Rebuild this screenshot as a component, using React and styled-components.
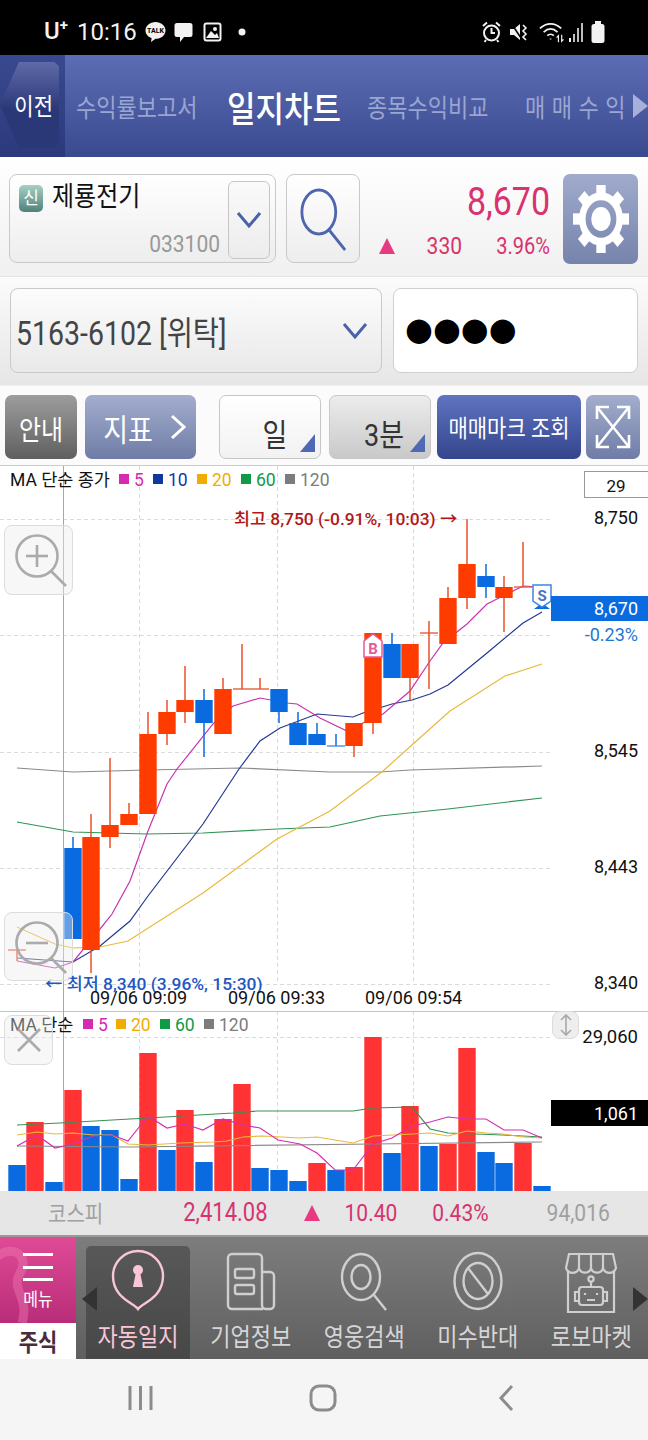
import React from "react";
import styled, { createGlobalStyle, css } from "styled-components";

const FONT = `Roboto, "Noto Sans CJK KR", sans-serif`;
const PINK = "#d8326f";

const GlobalStyle = createGlobalStyle`
  html, body {
    margin: 0;
    padding: 0;
    background: #fff;
    font-family: ${FONT};
  }
  * { box-sizing: border-box; }
`;

// the app's own text is drawn a bit stretched on this phone
const tall = css`
  display: inline-block;
  transform: scaleY(1.15);
`;

const Page = styled.div`
  width: 648px;
  height: 1440px;
  overflow: hidden;
  display: flex;
  flex-direction: column;
`;

/* status bar */
const StatusBar = styled.div`
  height: 55px;
  background: #000;
  color: #f2f2f2;
  display: flex;
  align-items: center;
  padding: 9px 43px 0 44px;
`;
const Carrier = styled.span`
  font-size: 24px;
  font-weight: 500;
  width: 33px;
  position: relative;
  top: -1px;
  sup { font-size: 15px; line-height: 0; font-weight: 700; }
`;
const Clock = styled.span`
  font-size: 24px;
  margin-right: 8px;
`;
const StatusIcons = styled.div`
  display: flex;
  align-items: center;
  gap: ${(p) => p.$gap || 6}px;
  margin-left: ${(p) => (p.$right ? "auto" : 0)};
`;
const StatusGlyph = styled.svg`
  margin-left: ${(p) => p.$ml || 0}px;
`;

/* header */
const Header = styled.div`
  height: 102px;
  display: flex;
  align-items: center;
  background: linear-gradient(#5c6db5, #3a4a8f);
`;
const BackArea = styled.div`
  width: 65px;
  height: 100%;
  background: linear-gradient(#39498f, #2c3a7c);
  display: flex;
  align-items: center;
`;
const BackButton = styled.div`
  width: 59px;
  height: 86px;
  margin-top: -2px;
  background: linear-gradient(#5f6aa8, #2b3878 55%);
  clip-path: polygon(0 50%, 32% 0, 92% 0, 100% 5%, 100% 95%, 92% 100%, 32% 100%);
  color: #fff;
  font-size: 21px;
  display: flex;
  align-items: center;
  justify-content: flex-end;
  padding-right: 6px;
  span { ${tall} }
`;
const Tabs = styled.div`
  flex: 1;
  display: flex;
  align-items: center;
  padding-left: 11px;
  white-space: nowrap;
`;
const Tab = styled.span`
  ${tall}
  width: ${(p) => p.$w}px;
  font-size: ${(p) => (p.$active ? 31 : 22)}px;
  font-weight: ${(p) => (p.$active ? 500 : 400)};
  color: ${(p) => (p.$active ? "#fff" : "#9aa5d2")};
  letter-spacing: ${(p) => p.$ls || 0}px;
`;
const TabArrow = styled.span`
  width: 0;
  height: 0;
  margin-left: -7px;
  border-left: 15px solid #a7b0d8;
  border-top: 12px solid transparent;
  border-bottom: 12px solid transparent;
`;

/* stock row */
const StockRow = styled.div`
  height: 120px;
  display: flex;
  padding: 17px 10px 0 9px;
  background: linear-gradient(#fff, #f0f0f0);
  border-bottom: 1px solid #e4e4e4;
`;
const Combo = styled.div`
  width: 267px;
  height: 89px;
  border: 1px solid #c9c9c9;
  border-radius: 8px;
  background: linear-gradient(#fff, #ededed);
  display: flex;
  padding: 6px 5px 4px 9px;
`;
const ComboText = styled.div`
  flex: 1;
  display: flex;
  flex-direction: column;
  justify-content: space-between;
`;
const StockName = styled.div`
  display: flex;
  align-items: center;
  gap: 9px;
  font-size: 24px;
  line-height: 30px;
  color: #111;
  margin-top: 1px;
  span:last-child { ${tall} }
`;
const Badge = styled.span`
  width: 24px;
  height: 27px;
  margin-top: 3px;
  border-radius: 5px;
  background: linear-gradient(#a5d0c4, #4f8279);
  color: #fff;
  font-size: 17px;
  line-height: 27px;
  text-align: center;
`;
const StockCode = styled.div`
  font-size: 21px;
  line-height: 26px;
  color: #999;
  text-align: right;
  margin: 0 8px 1px 0;
  transform: scaleY(1.15);
`;
const DropButton = styled.div`
  width: 42px;
  height: 78px;
  border: 1px solid #c6c6c6;
  border-radius: 6px;
  background: linear-gradient(#fafafa, #ececec);
  display: flex;
  align-items: center;
  justify-content: center;
`;
const SearchButton = styled.div`
  width: 74px;
  height: 89px;
  margin-left: 10px;
  border: 1px solid #c9c9c9;
  border-radius: 8px;
  background: linear-gradient(#fff, #ededed);
  display: flex;
  align-items: center;
  justify-content: center;
`;
const PriceBlock = styled.div`
  flex: 1;
  height: 89px;
  padding-right: 13px;
  display: flex;
  flex-direction: column;
  align-items: flex-end;
  justify-content: space-between;
  color: ${PINK};
`;
const Price = styled.div`
  ${tall}
  font-size: 34px;
  line-height: 50px;
  margin-top: 2px;
`;
const Change = styled.div`
  display: flex;
  align-items: center;
  font-size: 21px;
  line-height: 28px;
  margin-bottom: 3px;
`;
const ChangeValue = styled.span`
  ${tall}
  width: ${(p) => p.$w}px;
  font-size: ${(p) => p.$fs || 21}px;
  text-align: right;
`;
const UpMark = styled.span`
  width: 0;
  height: 0;
  border-left: ${(p) => p.$size}px solid transparent;
  border-right: ${(p) => p.$size}px solid transparent;
  border-bottom: ${(p) => p.$size * 2}px solid #e83a80;
`;
const GearButton = styled.div`
  width: 75px;
  height: 90px;
  border-radius: 7px;
  background: linear-gradient(#a0abcc, #7683ab);
  display: flex;
  align-items: center;
  justify-content: center;
`;

/* account row */
const AccountRow = styled.div`
  height: 108px;
  display: flex;
  gap: 11px;
  padding: 11px 10px 0 10px;
  background: linear-gradient(#fbfbfb, #e6e6e6);
`;
const AccountSelect = styled.div`
  width: 372px;
  height: 85px;
  border: 1px solid #c9c9c9;
  border-radius: 8px;
  background: linear-gradient(#fcfcfc, #e9e9e9);
  display: flex;
  align-items: center;
  justify-content: space-between;
  padding: 0 13px 0 5px;
  font-size: 28.5px;
  color: #444;
  span { ${tall} }
`;
const Password = styled.div`
  flex: 1;
  height: 85px;
  border: 1px solid #d0d0d0;
  border-radius: 8px;
  background: #fff;
  display: flex;
  align-items: center;
  padding: 0 0 4px 11px;
  font-family: "DejaVu Sans", sans-serif;
  font-size: 32px;
  color: #000;
`;

/* toolbar */
const Toolbar = styled.div`
  height: 81px;
  display: flex;
  padding: 9px 0 0 5px;
  background: #fbfbfb;
  border-bottom: 1px solid #ccc;
  border-top: 1px solid #f0f0f0;
`;
const toolbarSkins = {
  dark: "background: linear-gradient(#9d9d9d, #5f5f5f); color: #fff;",
  slate: "background: linear-gradient(#a3aecd, #6f7ca6); color: #fff;",
  white: "background: linear-gradient(#fff, #f2f2f2); color: #333; border: 1px solid #c6c6c6;",
  grey: "background: linear-gradient(#ececec, #c9c9c9); color: #333; border: 1px solid #c9c9c9;",
  blue: "background: linear-gradient(#5f73c0, #33458c); color: #fff;",
};
const ToolButton = styled.div`
  position: relative;
  width: ${(p) => p.$w}px;
  height: 64px;
  margin-left: ${(p) => p.$ml || 0}px;
  padding-left: ${(p) => p.$pl || 0}px;
  border-radius: 7px;
  font-size: ${(p) => p.$fs || 24}px;
  display: flex;
  align-items: center;
  justify-content: center;
  gap: 17px;
  ${(p) => toolbarSkins[p.$skin]}
`;
const ToolLabel = styled.span`
  ${tall}
`;
const Corner = styled.span`
  position: absolute;
  right: 5px;
  bottom: 6px;
  width: 0;
  height: 0;
  border-left: 15px solid transparent;
  border-bottom: 18px solid #5069b5;
`;
const PeriodText = styled.span`
  ${tall}
  margin: 11px 0 0 ${(p) => p.$ml}px;
  font-size: 27px;
`;

/* chart */
const ChartPanel = styled.div`
  position: relative;
  height: 725px;
  background: #fff;
  svg { display: block; }
  text { font-family: ${FONT}; }
`;
const ChartButton = styled.div`
  position: absolute;
  left: ${(p) => p.$x}px;
  top: ${(p) => p.$y}px;
  width: ${(p) => p.$w}px;
  height: ${(p) => p.$h}px;
  border: 1px solid #dcdcdc;
  border-radius: 8px;
  background: rgba(236, 236, 236, ${(p) => p.$alpha || 0.4});
  display: flex;
  align-items: center;
  justify-content: center;
`;

/* kospi */
const IndexBar = styled.div`
  height: 46px;
  background: #e6e6e6;
  border-bottom: 2px solid #999;
  display: flex;
  align-items: center;
  padding-bottom: 1px;
`;
const IndexValue = styled.span`
  ${tall}
  color: ${(p) => (p.$muted ? "#a0a0a0" : PINK)};
  margin-left: ${(p) => p.$ml}px;
  font-size: ${(p) => p.$fs || 21}px;
`;
const IndexMark = styled.span`
  margin-left: 36px;
  display: flex;
`;

/* bottom menu */
const BottomNav = styled.div`
  height: 122px;
  display: flex;
  background: linear-gradient(#7d7d7d, #5f5f5f);
`;
const MenuTile = styled.div`
  flex: 0 0 76px;
  display: flex;
  flex-direction: column;
`;
const MenuTop = styled.div`
  position: relative;
  height: 86px;
  overflow: hidden;
  background: linear-gradient(#e04a96, #b92d78);
  color: #fff;
  font-size: 15px;
  display: flex;
  flex-direction: column;
  align-items: center;
  padding-top: 16px;
  border-top-right-radius: 4px;
`;
const Swirl = styled.svg`
  position: absolute;
  left: 0;
  top: 0;
`;
const Hamburger = styled.span`
  position: relative;
  width: 30px;
  height: 28px;
  border-top: 3px solid #fff;
  border-bottom: 3px solid #fff;
  &::after {
    content: "";
    position: absolute;
    left: 0;
    right: 0;
    top: 10px;
    height: 3px;
    background: #fff;
  }
`;
const MenuLabel = styled.span`
  ${tall}
  position: relative;
  margin-top: 8px;
  font-size: 16px;
  line-height: 22px;
`;
const MenuStock = styled.div`
  flex: 1;
  background: #fff;
  color: #4b2b3a;
  font-size: 21px;
  font-weight: 700;
  display: flex;
  align-items: center;
  justify-content: center;
  span { ${tall} }
`;
const NavArrow = styled.span`
  flex: none;
  position: relative;
  z-index: 1;
  width: 0;
  height: 0;
  align-self: center;
  margin-top: 2px;
  margin-left: ${(p) => p.$ml}px;
  border-top: 12px solid transparent;
  border-bottom: 12px solid transparent;
  ${(p) => (p.$left ? "border-right: 15px solid #333;" : "border-left: 15px solid #333;")}
`;
const NavItems = styled.div`
  flex: none;
  display: flex;
  margin-left: -11px;
`;
const NavItem = styled.div`
  flex: none;
  width: ${(p) => (p.$active ? 104 : 113.5)}px;
  margin-top: 9px;
  margin-right: ${(p) => (p.$active ? 4 : 0)}px;
  border-radius: 5px 5px 0 0;
  background: ${(p) => (p.$active ? "linear-gradient(#585858, #474747)" : "transparent")};
  color: ${(p) => (p.$active ? "#f9c6d8" : "#d6d6d6")};
  display: flex;
  flex-direction: column;
  align-items: center;
  font-size: 22px;
  svg { height: 72px; margin-bottom: 1px; }
`;
const NavLabel = styled.span`
  ${tall}
`;

/* android nav */
const SystemNav = styled.div`
  flex: 1;
  background: #f5f5f5;
  display: flex;
  align-items: center;
  padding: 0 0 0 128px;
  svg { margin-bottom: 4px; }
`;
const SystemIcon = styled.svg`
  margin-right: ${(p) => p.$mr}px;
`;

/* chart data: page coordinates, the svg viewBox starts at y = 465 */
const CANDLES = [
  { x: 17, o: 949, c: 949, h: 949, l: 960, up: true },
  { x: 73, o: 847, c: 938, h: 836, l: 938 },
  { x: 91, o: 836, c: 949, h: 813, l: 972, up: true },
  { x: 110, o: 824, c: 836, h: 757, l: 847, up: true },
  { x: 129, o: 813, c: 824, h: 802, l: 824, up: true },
  { x: 148, o: 733, c: 813, h: 711, l: 813, up: true },
  { x: 167, o: 711, c: 733, h: 699, l: 744, up: true },
  { x: 185, o: 699, c: 711, h: 665, l: 722, up: true },
  { x: 204, o: 699, c: 722, h: 688, l: 756 },
  { x: 223, o: 688, c: 733, h: 677, l: 733, up: true },
  { x: 242, o: 688, c: 688, h: 643, l: 688, up: true },
  { x: 260, o: 688, c: 688, h: 677, l: 688, up: true },
  { x: 279, o: 688, c: 711, h: 688, l: 722 },
  { x: 298, o: 722, c: 744, h: 711, l: 744 },
  { x: 317, o: 733, c: 744, h: 722, l: 744 },
  { x: 336, o: 745, c: 745, h: 733, l: 745 },
  { x: 354, o: 722, c: 745, h: 722, l: 756, up: true },
  { x: 373, o: 632, c: 722, h: 632, l: 733, up: true },
  { x: 392, o: 643, c: 677, h: 632, l: 677 },
  { x: 410, o: 643, c: 677, h: 643, l: 699, up: true },
  { x: 429, o: 632, c: 632, h: 620, l: 688, up: true },
  { x: 448, o: 597, c: 643, h: 586, l: 643, up: true },
  { x: 467, o: 563, c: 597, h: 518, l: 608, up: true },
  { x: 486, o: 575, c: 586, h: 563, l: 597 },
  { x: 504, o: 586, c: 597, h: 575, l: 631, up: true },
  { x: 523, o: 586, c: 586, h: 541, l: 586, up: true },
];

const PRICE_LINES = [
  { color: "#8a8a8a", pts: "17,767 73,771 147,769 240,767 330,771 380,771 410,769 542,765" },
  { color: "#2f9455", pts: "17,821 73,831 147,833 203,832 277,828 330,826 380,815 448,808 542,797" },
  { color: "#e8b93a", pts: "17,926 55,943 73,947 100,946 128,940 203,892 277,838 330,810 383,770 413,743 450,710 505,675 542,663" },
  { color: "#24388f", pts: "17,957 73,961 100,945 130,920 148,895 203,823 239,768 260,740 280,727 317,713 353,716 363,712 392,703 412,699 430,693 448,684 487,652 523,622 542,611" },
  { color: "#c932b0", pts: "17,960 55,967 73,961 100,928 112,913 130,880 148,830 167,783 177,768 213,723 233,705 260,697 287,702 297,703 320,717 347,730 363,722 383,713 410,690 430,660 443,642 467,623 487,603 503,595 523,585 540,586" },
];

const VOLUMES = [
  [17, 1164], [35, 1121, true], [54, 1181], [73, 1089, true], [91, 1125], [110, 1129],
  [129, 1178], [148, 1052, true], [167, 1149], [185, 1109, true], [204, 1161], [223, 1118, true],
  [242, 1083, true], [260, 1167], [279, 1169], [298, 1180], [317, 1162, true], [336, 1169],
  [354, 1166, true], [373, 1036, true], [392, 1152], [410, 1105, true], [429, 1145], [448, 1143, true],
  [467, 1047, true], [486, 1151], [504, 1162], [523, 1142, true], [542, 1185],
];

const VOLUME_LINES = [
  { color: "#8a8a8a", pts: "17,1145 130,1146 373,1143 542,1141" },
  { color: "#3b8f55", pts: "17,1124 60,1122 130,1118 148,1117 233,1112 257,1110 353,1110 373,1107 412,1106 430,1128 448,1132 503,1134 542,1136" },
  { color: "#e8b93a", pts: "17,1134 37,1131 55,1133 73,1132 93,1134 112,1134 128,1143 148,1144 180,1142 213,1141 227,1140 243,1136 263,1135 300,1137 317,1136 353,1142 373,1135 412,1133 430,1132 448,1135 467,1130 487,1132 503,1133 523,1136 542,1137" },
  { color: "#d42fb0", pts: "17,1145 37,1134 55,1147 73,1143 93,1135 112,1134 128,1140 148,1115 167,1127 185,1123 203,1129 223,1118 243,1124 260,1127 278,1139 300,1143 317,1152 335,1169 353,1169 373,1143 392,1137 412,1125 430,1121 448,1116 467,1118 486,1118 504,1129 523,1129 542,1137" },
];

const PRICE_GRID = [518, 634, 751, 867, 983];
const PRICE_AXIS = [
  { y: 518, label: "8,750" },
  { y: 751, label: "8,545" },
  { y: 867, label: "8,443" },
  { y: 983, label: "8,340" },
];
const DATES = [
  { x: 90, label: "09/06 09:09" },
  { x: 228, label: "09/06 09:33" },
  { x: 365, label: "09/06 09:54" },
];
const VERTICALS = [139, 277, 413];
const RED = "#ff3c00";
const BLUE = "#0a6be0";

const Legend = ({ y, title, items }) => (
  <g fontSize="17.5">
    <text x="10" y={y} fill="#111">{title}</text>
    {items.map((it) => (
      <g key={it.label}>
        <rect x={it.x} y={y - 12} width="10" height="10" fill={it.color} />
        <text x={it.x + 15} y={y} fill={it.color}>{it.label}</text>
      </g>
    ))}
  </g>
);

const ChartDrawing = () => (
  <svg width="648" height="725" viewBox="0 465 648 725">
    {/* grid */}
    <g stroke="#dadada" strokeDasharray="4 3" strokeWidth="1">
      {PRICE_GRID.map((y) => <line key={y} x1="0" x2="552" y1={y + 0.5} y2={y + 0.5} />)}
      {VERTICALS.map((x) => <line key={x} x1={x + 0.5} x2={x + 0.5} y1="465" y2="983" />)}
      {VERTICALS.map((x) => <line key={x} x1={x + 0.5} x2={x + 0.5} y1="1010" y2="1190" />)}
      <line x1="0" x2="552" y1="1036.5" y2="1036.5" />
    </g>
    <line x1="0" x2="648" y1="1010.5" y2="1010.5" stroke="#c4c4c4" />
    <line x1="63.5" x2="63.5" y1="465" y2="1190" stroke="#f08a8a" />

    {/* price: averages run behind the candles */}
    {PRICE_LINES.map((l) => (
      <polyline key={l.color} points={l.pts} fill="none" stroke={l.color} strokeWidth="1.2" />
    ))}
    {CANDLES.map((c) => (
      <g key={c.x}>
        <line x1={c.x} x2={c.x} y1={c.h} y2={c.l} stroke={c.up ? "#e8502a" : BLUE} strokeWidth="1.5" />
        {c.o === c.c ? (
          <line x1={c.x - 9} x2={c.x + 9} y1={c.o} y2={c.o} stroke={c.up ? "#e8502a" : "#3b86e0"} strokeWidth="1.3" />
        ) : (
          <rect x={c.x - 8.7} y={c.o} width="17.4" height={c.c - c.o} fill={c.up ? RED : BLUE} />
        )}
      </g>
    ))}

    {/* buy and sell marks */}
    <path d="M364 640 L373 633 L382 640 V656 H364 Z" fill="#fff" stroke="#e65a9a" strokeWidth="1.5" />
    <text x="373" y="653" fontSize="15" fontWeight="700" fill="#e65a9a" textAnchor="middle">B</text>
    <path d="M534 608 H550 L542 602 Z" fill={BLUE} />
    <path d="M533 584 H551 V600 L542 606 L533 600 Z" fill="#fff" stroke="#3b86e0" strokeWidth="1.5" />
    <text x="542" y="600" fontSize="15" fontWeight="700" fill="#4a76b8" textAnchor="middle">S</text>

    {/* notes */}
    <text x="234" y="524" fontSize="17.4" fontWeight="500" fill="#b01818">최고 8,750 (-0.91%, 10:03) →</text>
    <text x="45" y="989" fontSize="17.4" fontWeight="500" fill="#1f57c3">← 최저 8,340 (3.96%, 15:30)</text>
    {DATES.map((d) => (
      <text key={d.x} x={d.x} y="1003" fontSize="18" fill="#111">{d.label}</text>
    ))}

    <Legend
      y={485}
      title="MA 단순 종가"
      items={[
        { x: 119, label: "5", color: "#d62bb0" },
        { x: 153, label: "10", color: "#1237a0" },
        { x: 197, label: "20", color: "#f0ad00" },
        { x: 241, label: "60", color: "#0f9a48" },
        { x: 285, label: "120", color: "#7c7c7c" },
      ]}
    />

    {/* axis */}
    <rect x="584.5" y="470.5" width="66" height="26" fill="#fff" stroke="#999" />
    <text x="616" y="491" fontSize="17" fill="#111" textAnchor="middle">29</text>
    {PRICE_AXIS.map((a) => (
      <text key={a.y} x="638" y={a.y + 5} fontSize="18" fill="#111" textAnchor="end">{a.label}</text>
    ))}
    <rect x="551" y="595" width="97" height="25" fill={BLUE} />
    <text x="638" y="614" fontSize="18" fill="#fff" textAnchor="end">8,670</text>
    <text x="638" y="640" fontSize="18" fill="#1c78d2" textAnchor="end">-0.23%</text>

    {/* volume */}
    {VOLUMES.map(([x, top, up]) => (
      <rect key={x} x={x - 8.7} y={top} width="17.4" height={1190 - top} fill={up ? "#ff3333" : BLUE} />
    ))}
    {VOLUME_LINES.map((l) => (
      <polyline key={l.color} points={l.pts} fill="none" stroke={l.color} strokeWidth="1.2" />
    ))}
    <Legend
      y={1030}
      title="MA 단순"
      items={[
        { x: 83, label: "5", color: "#d62bb0" },
        { x: 116, label: "20", color: "#f0ad00" },
        { x: 160, label: "60", color: "#0f9a48" },
        { x: 204, label: "120", color: "#7c7c7c" },
      ]}
    />
    <text x="638" y="1042" fontSize="18.5" fill="#111" textAnchor="end">29,060</text>
    <rect x="551" y="1099" width="97" height="26" fill="#000" />
    <text x="638" y="1119" fontSize="18" fill="#fff" textAnchor="end">1,061</text>
  </svg>
);

const ZoomIcon = ({ minus }) => (
  <svg width="66" height="66" viewBox="0 0 66 66" fill="none" stroke="#ababab" strokeWidth="2.6">
    <circle cx="31" cy="29" r="20.5" />
    <path d="M45 44 L60 59" />
    <path d="M20 29 H42" />
    {!minus && <path d="M31 18 V40" />}
  </svg>
);

const Chevron = ({ w = 26, h = 18 }) => (
  <svg width={w} height={h} viewBox="0 0 26 18" fill="none" stroke="#4a62a8" strokeWidth="3">
    <path d="M2 2 L13 15 L24 2" />
  </svg>
);

const GearIcon = () => {
  const teeth = [0, 45, 90, 135, 180, 225, 270, 315];
  return (
    <svg width="56" height="68" viewBox="0 0 60 60" preserveAspectRatio="none">
      {teeth.map((a) => (
        <rect key={a} x="25" y="0" width="10" height="10" fill="#fff" transform={`rotate(${a} 30 30)`} />
      ))}
      <circle cx="30" cy="30" r="20" fill="none" stroke="#fff" strokeWidth="7" />
      <circle cx="30" cy="30" r="10.5" fill="#fff" />
    </svg>
  );
};

const icons = {
  key: (
    <svg width="60" height="72" viewBox="0 0 60 72" fill="none" stroke="#f9c6d8" strokeWidth="2.4">
      <path d="M30 63 C26 57 5 52 5 30 A25 25 0 0 1 55 30 C55 52 34 57 30 63 Z" />
      <circle cx="30" cy="24" r="5" fill="#f9c6d8" stroke="none" />
      <path d="M28 26 L25 41 H35 L32 26 Z" fill="#f9c6d8" stroke="none" />
    </svg>
  ),
  company: (
    <svg width="60" height="72" viewBox="0 0 60 72" fill="none" stroke="#cfcfcf" strokeWidth="2.4">
      <path d="M42 63 H11 A4 4 0 0 1 7 59 V12 A4 4 0 0 1 11 8 H37 A4 4 0 0 1 41 12 V59 A4 4 0 0 0 45 63 H49 A4 4 0 0 0 53 59 V30 A4 4 0 0 0 49 26 H41" />
      <rect x="14" y="23" width="19" height="9" rx="2" />
      <rect x="14" y="39" width="19" height="9" rx="2" />
    </svg>
  ),
  hero: (
    <svg width="60" height="72" viewBox="0 0 60 72" fill="none" stroke="#cfcfcf" strokeWidth="2.4">
      <ellipse cx="27" cy="31" rx="19" ry="23" />
      <ellipse cx="27" cy="31" rx="9.5" ry="12" />
      <path d="M40 49 L52 64" />
    </svg>
  ),
  ban: (
    <svg width="60" height="72" viewBox="0 0 60 72" fill="none" stroke="#cfcfcf" strokeWidth="2.4">
      <ellipse cx="30" cy="35" rx="23.5" ry="28" />
      <ellipse cx="30" cy="35" rx="14.5" ry="18" />
      <path d="M20 22 L40 48" />
    </svg>
  ),
  robot: (
    <svg width="60" height="72" viewBox="0 0 60 72" fill="none" stroke="#cfcfcf" strokeWidth="2.2">
      <path d="M8 8 H52 L55 22 A6.8 6.8 0 0 1 42 22 A6.2 6.2 0 0 1 30 22 A6.2 6.2 0 0 1 18 22 A6.8 6.8 0 0 1 5 22 Z" />
      <path d="M18 8 L18 22 M30 8 V22 M42 8 L42 22" />
      <path d="M7 24 V66 H53 V24" />
      <circle cx="30" cy="33" r="2.6" />
      <path d="M30 36 V41" />
      <rect x="18" y="41" width="24" height="18" rx="3" />
      <path d="M18 46 H14 V55 H18 M42 46 H46 V55 H42" />
      <path d="M24 47 V49 M36 47 V49 M26 54 H34" />
    </svg>
  ),
};

const NAV_ITEMS = [
  { label: "자동일지", icon: "key", active: true },
  { label: "기업정보", icon: "company" },
  { label: "영웅검색", icon: "hero" },
  { label: "미수반대", icon: "ban" },
  { label: "로보마켓", icon: "robot" },
];

const StatusBarIcons = () => (
  <>
    <StatusIcons>
      <svg width="21" height="22" viewBox="0 0 21 22">
        <path d="M10.5 1 C16 1 20.5 4.6 20.5 9.4 S16 17.8 10.5 17.8 L6 21 L6.6 17 C2.8 15.7 .5 12.8 .5 9.4 C.5 4.6 5 1 10.5 1 Z" fill="#f2f2f2" />
        <text x="10.5" y="12" fontSize="7" fontWeight="700" fill="#000" textAnchor="middle">TALK</text>
      </svg>
      <StatusGlyph $ml={2} width="19" height="21" viewBox="0 0 19 21">
        <path d="M3 1 H16 A2.5 2.5 0 0 1 18.5 3.5 V12.5 A2.5 2.5 0 0 1 16 15 H10 L6 20 V15 H3 A2.5 2.5 0 0 1 .5 12.5 V3.5 A2.5 2.5 0 0 1 3 1 Z" fill="#f2f2f2" />
      </StatusGlyph>
      <StatusGlyph $ml={4} width="19" height="20" viewBox="0 0 19 20">
        <rect x=".5" y=".5" width="18" height="19" rx="3" fill="#f2f2f2" />
        <rect x="2.5" y="2.5" width="14" height="15" rx="1" fill="#000" />
        <circle cx="12" cy="7" r="2" fill="#f2f2f2" />
        <path d="M3 16 L8 9 L12 13 L14 11 L16 16 Z" fill="#f2f2f2" />
      </StatusGlyph>
      <StatusGlyph $ml={10} width="8" height="8" viewBox="0 0 8 8">
        <circle cx="4" cy="4" r="3.5" fill="#f2f2f2" />
      </StatusGlyph>
    </StatusIcons>
    <StatusIcons $right $gap={8}>
      <svg width="19" height="22" viewBox="0 0 19 22" fill="none" stroke="#f2f2f2" strokeWidth="2">
        <circle cx="9.5" cy="12" r="7.5" />
        <path d="M9.5 7 V12 H13" />
        <path d="M1 5 L5 1.5 M18 5 L14 1.5 M4 19 L2.5 21 M15 19 L16.5 21" />
      </svg>
      <svg width="22" height="22" viewBox="0 0 22 22" fill="#f2f2f2">
        <path d="M1 8 H5 L11 3 V19 L5 14 H1 Z" />
        <path d="M2 2 L14 20" stroke="#000" strokeWidth="1.5" />
        <path d="M14 4 L17 7 L14 10 L17 13 L14 16 L17 19" fill="none" stroke="#f2f2f2" strokeWidth="1.6" />
      </svg>
      <svg width="25" height="23" viewBox="0 0 27 23" fill="none" stroke="#f2f2f2" strokeWidth="1.9">
        <path d="M1 7 C8 .5 17 .5 24 7" />
        <path d="M5 11 C10 6.5 15 6.5 20 11" />
        <path d="M9 15 C11 13 14 13 16 15" />
        <path d="M12.5 18 V19" />
        <path d="M21 22 V15 L19 17 M24.5 14 V21 L26.5 19" strokeWidth="1.3" />
      </svg>
      <StatusGlyph $ml={-4} width="16" height="21" viewBox="0 0 16 21" fill="#bdbdbd">
        <rect x="1" y="16" width="2" height="4" fill="#f2f2f2" />
        <rect x="5" y="12" width="2" height="8" />
        <rect x="9" y="6" width="2" height="14" />
        <rect x="13" y="1" width="2" height="19" />
      </StatusGlyph>
      <StatusGlyph $ml={-1} width="14" height="22" viewBox="0 0 14 22" fill="#f2f2f2">
        <rect x="4" y="0" width="6" height="3" />
        <rect x="0.5" y="3" width="13" height="19" rx="2.5" />
      </StatusGlyph>
    </StatusIcons>
  </>
);

const App = () => (
  <Page>
    <GlobalStyle />
    <StatusBar>
      <Carrier>U<sup>+</sup></Carrier>
      <Clock>10:16</Clock>
      <StatusBarIcons />
    </StatusBar>

    <Header>
      <BackArea>
        <BackButton><span>이전</span></BackButton>
      </BackArea>
      <Tabs>
        <Tab $w={151}>수익률보고서</Tab>
        <Tab $w={140} $active>일지차트</Tab>
        <Tab $w={158}>종목수익비교</Tab>
        <Tab $w={115} $ls={6.5}>매매수익</Tab>
        <TabArrow />
      </Tabs>
    </Header>

    <StockRow>
      <Combo>
        <ComboText>
          <StockName><Badge>신</Badge><span>제룡전기</span></StockName>
          <StockCode>033100</StockCode>
        </ComboText>
        <DropButton><Chevron /></DropButton>
      </Combo>
      <SearchButton>
        <svg width="47" height="66" viewBox="0 0 50 66" fill="none" stroke="#4f65ad" strokeWidth="3" preserveAspectRatio="none">
          <ellipse cx="20" cy="26" rx="18" ry="22" />
          <path d="M31 44 L48 64" />
        </svg>
      </SearchButton>
      <PriceBlock>
        <Price>8,670</Price>
        <Change>
          <UpMark $size={8} />
          <ChangeValue $w={67}>330</ChangeValue>
          <ChangeValue $w={88} $fs={20}>3.96%</ChangeValue>
        </Change>
      </PriceBlock>
      <GearButton><GearIcon /></GearButton>
    </StockRow>

    <AccountRow>
      <AccountSelect>
        <span>5163-6102 [위탁]</span>
        <Chevron />
      </AccountSelect>
      <Password>●●●●</Password>
    </AccountRow>

    <Toolbar>
      <ToolButton $w={72} $skin="dark"><ToolLabel>안내</ToolLabel></ToolButton>
      <ToolButton $w={111} $ml={8} $pl={8} $skin="slate" $fs={27}>
        <ToolLabel>지표</ToolLabel>
        <svg width="16" height="26" viewBox="0 0 16 26" fill="none" stroke="#fff" strokeWidth="3">
          <path d="M2 2 L14 13 L2 24" />
        </svg>
      </ToolButton>
      <ToolButton $w={102} $ml={23} $skin="white">
        <PeriodText $ml={10}>일</PeriodText>
        <Corner />
      </ToolButton>
      <ToolButton $w={102} $ml={8} $skin="grey">
        <PeriodText $ml={8}>3분</PeriodText>
        <Corner />
      </ToolButton>
      <ToolButton $w={144} $ml={6} $skin="blue" $fs={21}><ToolLabel>매매마크 조회</ToolLabel></ToolButton>
      <ToolButton $w={54} $ml={5} $skin="slate">
        <svg width="36" height="44" viewBox="0 0 36 44" fill="none" stroke="#fff" strokeWidth="2.6">
          <path d="M2 2 L34 42 M34 2 L2 42" />
          <path d="M2 14 V2 H14 M22 2 H34 V14 M34 30 V42 H22 M14 42 H2 V30" />
        </svg>
      </ToolButton>
    </Toolbar>

    <ChartPanel>
      <ChartDrawing />
      <ChartButton $x={4} $y={59} $w={69} $h={70}><ZoomIcon /></ChartButton>
      <ChartButton $x={4} $y={446} $w={69} $h={69}><ZoomIcon minus /></ChartButton>
      <ChartButton $x={4} $y={549} $w={49} $h={50}>
        <svg width="30" height="30" viewBox="0 0 30 30" stroke="#ababab" strokeWidth="2.6">
          <path d="M4 4 L26 26 M26 4 L4 26" />
        </svg>
      </ChartButton>
      <ChartButton $x={552} $y={545} $w={27} $h={28} $alpha={0.9}>
        <svg width="12" height="22" viewBox="0 0 12 22" fill="none" stroke="#a8a8a8" strokeWidth="1.6">
          <path d="M6 1 V21 M1 6 L6 1 L11 6 M1 16 L6 21 L11 16" />
        </svg>
      </ChartButton>
    </ChartPanel>

    <IndexBar>
      <IndexValue $muted $ml={48} $fs={20}>코스피</IndexValue>
      <IndexValue $ml={80} $fs={22}>2,414.08</IndexValue>
      <IndexMark><UpMark $size={8} /></IndexMark>
      <IndexValue $ml={25}>10.40</IndexValue>
      <IndexValue $ml={35}>0.43%</IndexValue>
      <IndexValue $muted $ml={58}>94,016</IndexValue>
    </IndexBar>

    <BottomNav>
      <MenuTile>
        <MenuTop>
          <Swirl width="76" height="86" viewBox="0 0 76 86" fill="none" stroke="#ef7fb6" strokeOpacity="0.4" strokeWidth="9">
            <path d="M-4 20 C14 6 30 20 20 36 C10 52 30 60 22 86" />
          </Swirl>
          <Hamburger />
          <MenuLabel>메뉴</MenuLabel>
        </MenuTop>
        <MenuStock><span>주식</span></MenuStock>
      </MenuTile>
      <NavArrow $left $ml={6} />
      <NavItems>
        {NAV_ITEMS.map((item) => (
          <NavItem key={item.label} $active={item.active}>
            {icons[item.icon]}
            <NavLabel>{item.label}</NavLabel>
          </NavItem>
        ))}
      </NavItems>
      <NavArrow $ml={-15} />
    </BottomNav>

    <SystemNav>
      <SystemIcon $mr={156} width="25" height="26" viewBox="0 0 25 26" stroke="#8c8c8c" strokeWidth="3">
        <path d="M2 1 V25 M12.5 1 V25 M23 1 V25" />
      </SystemIcon>
      <SystemIcon $mr={161} width="28" height="28" viewBox="0 0 28 28" fill="none" stroke="#8c8c8c" strokeWidth="3">
        <rect x="2" y="2" width="24" height="24" rx="8" />
      </SystemIcon>
      <SystemIcon $mr={0} width="16" height="28" viewBox="0 0 16 28" fill="none" stroke="#8c8c8c" strokeWidth="3">
        <path d="M14 2 L3 14 L14 26" />
      </SystemIcon>
    </SystemNav>
  </Page>
);

export default App;
